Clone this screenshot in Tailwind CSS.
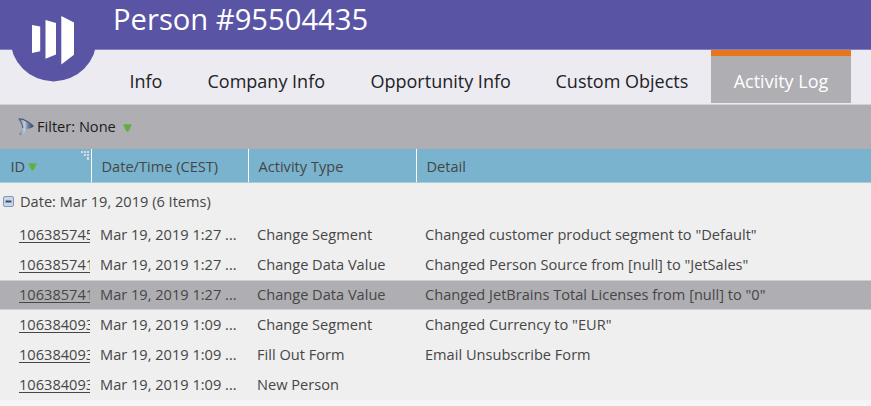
<!DOCTYPE html>
<html lang="en">
<head>
    <meta charset="UTF-8">
    <meta name="viewport" content="width=device-width, initial-scale=1.0">
    <title>Person #95504435</title>
    <script src="https://cdn.jsdelivr.net/npm/@tailwindcss/browser@4"></script>
</head>
<body class="bg-[#f5f5f5] font-['Open_Sans','Noto_Sans',sans-serif] text-[#464646] overflow-hidden">
    <div class="w-[871px] h-[406px] overflow-hidden">
        <header class="relative h-[50px] bg-[#5a54a4] border-b border-[#8480bd] pl-[113px]">
            <h1 class="text-[29.2px] leading-[38px] text-white">Person #95504435</h1>
            <svg class="absolute left-0 top-0 z-10" width="108" height="84" viewBox="0 0 108 84">
                <circle cx="53.5" cy="38.1" r="43.3" fill="#5a54a4"/>
                <g fill="#fff">
                    <path d="M32 25l8.200 1.500v24.800L32 53z"/>
                    <path d="M45.500 20l10.500 3v31.500l-10.500 4.300z"/>
                    <path d="M61.300 16L74 22.500v32.300l-12.700 9.800z"/>
                </g>
            </svg>
        </header>

        <nav class="flex h-[55px] bg-[#ecebf2] border-b border-[#d2d1d6] text-[18px] leading-[62px] text-[#222] whitespace-nowrap">
            <a class="ml-[129.5px] w-[78px]">Info</a>
            <a class="w-[163px]">Company Info</a>
            <a class="w-[185px]">Opportunity Info</a>
            <a class="w-[155.5px]">Custom Objects</a>
            <a class="w-[140px] h-[53px] bg-[#afaeb3] border-t-6 border-[#e8761c] text-white text-center leading-[50px]">Activity Log</a>
        </nav>

        <div class="flex items-center h-11 bg-[#afaeb3] pl-[18px] text-[14.6px] text-[#1c1c1c]">
            <svg class="mr-[3px]" width="16" height="18" viewBox="0 0 16 18">
                <defs>
                    <linearGradient id="funnel" x1="0" y1="0" x2="1" y2="0">
                        <stop offset="0" stop-color="#5f6f8b"/>
                        <stop offset=".38" stop-color="#c3cfdd"/>
                        <stop offset=".65" stop-color="#6b7d9a"/>
                        <stop offset="1" stop-color="#35435f"/>
                    </linearGradient>
                </defs>
                <path d="M.5.500L5 1C9 2.500 12.500 5 15.700 8c-1.200 2-3.500 2.500-6.200 3-2 1.500-3.300 4.200-6.500 6.500L1 16.200C3.200 13.500 4 11.500 3.800 9 3.500 6 2 3.500.500.500z" fill="url(#funnel)"/>
                <path d="M.8.800L5 1.400c4 1.500 7.200 3.700 10.200 6.600" fill="none" stroke="#4c5b79" stroke-width="1.300"/>
                <path d="M1.500 1.500C3 4 5 7 4.800 10" fill="none" stroke="#4c5b79"/>
            </svg>
            <span class="-mt-px">Filter: None</span>
            <svg class="ml-[7px] mt-px" width="9" height="8" viewBox="0 0 9 8"><path d="M.6.600h7.800L6 6.200 4.500 7.500 3 6.200z" fill="#56b62c" stroke="#7f9f78" stroke-width=".8"/></svg>
        </div>

        <div class="relative flex h-[34px] bg-[#79b3ce] border-b border-[#a9cddd] text-[14.6px] leading-[35px]">
            <div class="relative flex items-center w-[92px] pl-[10.5px] pt-px border-r border-white">
                ID
                <svg class="ml-[3px] mt-px" width="9" height="8" viewBox="0 0 9 8"><path d="M.6.600h7.800L6 6.200 4.500 7.500 3 6.200z" fill="#56b62c" stroke="#7fa58a" stroke-width=".8"/></svg>
                <svg class="absolute right-px top-[2px]" width="9" height="10" viewBox="0 0 9 10" fill="#d5dde2">
                    <path d="M0 0h2v2H0zM3 0h2v2H3zM6 0h2v2H6zM3 3h2v2H3zM6 3h2v2H6zM6 6h2v3H6z"/>
                </svg>
            </div>
            <div class="w-[157px] pl-[9.5px] border-r border-white">Date/Time (CEST)</div>
            <div class="w-[168px] pl-[9.5px] border-r border-white">Activity Type</div>
            <div class="pl-[9.5px]">Detail</div>
        </div>

        <main class="h-[217px] bg-[#efefef] text-[14.6px] leading-[26px]">
            <div class="flex items-center h-[37px] pl-[3px] pb-px">
                <svg class="mr-[6px]" width="11" height="11" viewBox="0 0 11 11">
                    <rect x=".5" y=".5" width="10" height="10" rx="1.500" fill="#c9d7e8" stroke="#8497b2"/>
                    <path d="M2.500 4.500h6v2h-6z" fill="#384c6d"/>
                </svg>
                Date: Mar 19, 2019 (6 Items)
            </div>
            <div id="rows"></div>
        </main>
    </div>

    <script>
        const activities = [
            ['106385745', 'Mar 19, 2019 1:27 ...', 'Change Segment', 'Changed customer product segment to "Default"'],
            ['106385741', 'Mar 19, 2019 1:27 ...', 'Change Data Value', 'Changed Person Source from [null] to "JetSales"'],
            ['106385741', 'Mar 19, 2019 1:27 ...', 'Change Data Value', 'Changed JetBrains Total Licenses from [null] to "0"'],
            ['106384093', 'Mar 19, 2019 1:09 ...', 'Change Segment', 'Changed Currency to "EUR"'],
            ['106384093', 'Mar 19, 2019 1:09 ...', 'Fill Out Form', 'Email Unsubscribe Form'],
            ['106384093', 'Mar 19, 2019 1:09 ...', 'New Person', '']
        ];
        const selected = 2;

        document.getElementById('rows').innerHTML = activities.map((row, i) => `
            <div class="flex h-[30px] border-y whitespace-nowrap ${i === selected ? 'bg-[#afaeb3] border-[#cfcfd2]' : 'border-transparent'}">
                <div class="ml-[19px] w-[71px] overflow-hidden"><a class="underline underline-offset-2">${row[0]}</a></div>
                <div class="ml-[10px] w-[157px]">${row[1]}</div>
                <div class="w-[168px]">${row[2]}</div>
                <div>${row[3]}</div>
            </div>
        `).join('');
    </script>
</body>
</html>
